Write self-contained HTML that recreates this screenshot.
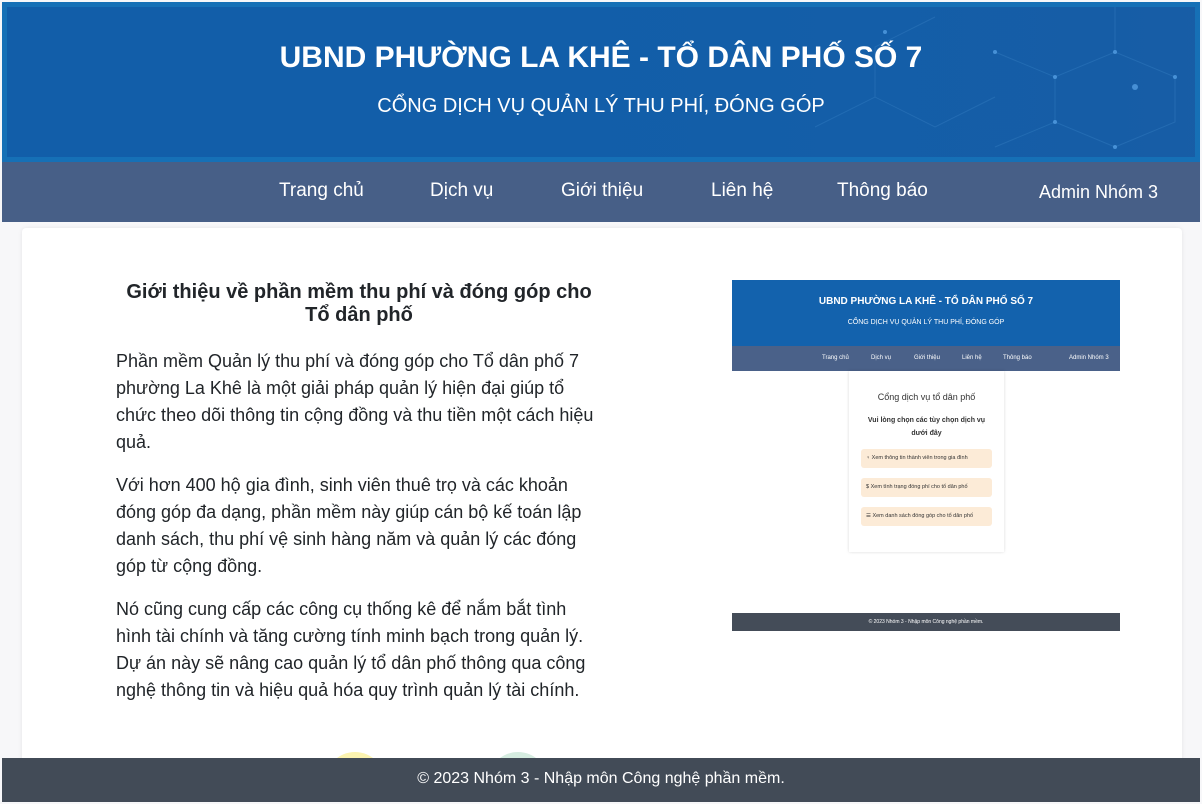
<!DOCTYPE html>
<html><head><meta charset="utf-8"><style>
*{margin:0;padding:0;box-sizing:border-box}
html,body{width:1202px;height:804px;overflow:hidden}
body{background:#f7f7f9;font-family:"Liberation Sans",sans-serif;position:relative}
.hdr{position:absolute;left:2px;top:2px;width:1198px;height:160px;background:#1670b6;padding:5px}
.hin{width:100%;height:100%;background:#125ea9;position:relative;overflow:hidden}
.hin h1{position:absolute;left:0;right:0;top:34px;text-align:center;color:#fff;font-size:30px;font-weight:bold}
.hin p{position:absolute;left:0;right:0;top:88px;text-align:center;color:#fff;font-size:20px}
.nav{position:absolute;left:2px;top:162px;width:1198px;height:60px;background:#475f87;color:#fff;font-size:19px}
.nav span{position:absolute;top:18px}
.card{position:absolute;left:22px;top:228px;width:1160px;height:540px;background:#fff;border-radius:4px;box-shadow:0 0 4px rgba(0,0,0,.08);overflow:hidden}
.txt{position:absolute;left:116px;top:281px;width:486px;color:#212529}
.txt h2{font-size:20px;font-weight:bold;text-align:center;line-height:23px;margin-bottom:21px}
.txt p{font-size:18px;line-height:27px;margin-bottom:16px}
.shot{position:absolute;left:732px;top:280px;width:388px;height:351px;background:#fff;font-family:"Liberation Sans",sans-serif}
.foot{position:absolute;left:2px;top:758px;width:1198px;height:44px;background:#424b57;color:#fff;font-size:16px;text-align:center;line-height:42px;z-index:5}
.ci{position:absolute;border-radius:50%}
</style></head><body>
<div class="hdr"><div class="hin">
<svg width="800" height="150" style="position:absolute;right:0;top:0" viewBox="0 0 800 150">
<defs><linearGradient id="g" x1="0" x2="1"><stop offset="0" stop-color="#125ea9" stop-opacity="0"/><stop offset="1" stop-color="#1b5ca3"/></linearGradient></defs>
<rect width="800" height="150" fill="url(#g)" opacity=".6"/>
<g stroke="#3d86c8" stroke-width="1" fill="none" opacity=".35">
<path d="M600 45L660 70L720 45L780 70M660 70L660 115L720 140M720 45L720 0M660 115L600 140M780 70L780 115L720 140"/>
<path d="M420 120L480 90L540 120L600 90M480 90L480 40L540 10"/>
</g>
<g fill="#5aa5ea" opacity=".7"><circle cx="660" cy="70" r="2"/><circle cx="720" cy="45" r="2"/><circle cx="780" cy="70" r="2"/><circle cx="740" cy="80" r="3"/><circle cx="660" cy="115" r="2"/><circle cx="720" cy="140" r="2"/><circle cx="490" cy="25" r="2"/><circle cx="600" cy="45" r="2"/></g>
</svg>
<h1>UBND PHƯỜNG LA KHÊ - TỔ DÂN PHỐ SỐ 7</h1>
<p>CỔNG DỊCH VỤ QUẢN LÝ THU PHÍ, ĐÓNG GÓP</p>
</div></div>
<div class="nav">
<span style="left:277px">Trang chủ</span><span style="left:428px">Dịch vụ</span><span style="left:559px">Giới thiệu</span><span style="left:709px">Liên hệ</span><span style="left:835px">Thông báo</span><span style="left:1037px;top:20px;font-size:18px">Admin Nhóm 3</span>
</div>
<div class="card">
<div class="ci" style="left:303px;top:524px;width:60px;height:60px;background:#fbf3b0"></div>
<div class="ci" style="left:466px;top:524px;width:60px;height:60px;background:#d5ece0"></div>
</div>
<div class="txt">
<h2>Giới thiệu về phần mềm thu phí và đóng góp cho Tổ dân phố</h2>
<p>Phần mềm Quản lý thu phí và đóng góp cho Tổ dân phố 7 phường La Khê là một giải pháp quản lý hiện đại giúp tổ chức theo dõi thông tin cộng đồng và thu tiền một cách hiệu quả.</p>
<p>Với hơn 400 hộ gia đình, sinh viên thuê trọ và các khoản đóng góp đa dạng, phần mềm này giúp cán bộ kế toán lập danh sách, thu phí vệ sinh hàng năm và quản lý các đóng góp từ cộng đồng.</p>
<p>Nó cũng cung cấp các công cụ thống kê để nắm bắt tình hình tài chính và tăng cường tính minh bạch trong quản lý. Dự án này sẽ nâng cao quản lý tổ dân phố thông qua công nghệ thông tin và hiệu quả hóa quy trình quản lý tài chính.</p>
</div>
<div class="shot">
<div style="position:absolute;left:0;top:0;width:388px;height:66px;background:#1362ad;color:#fff;text-align:center">
<div style="font-size:10px;font-weight:bold;margin-top:16px">UBND PHƯỜNG LA KHÊ - TỔ DÂN PHỐ SỐ 7</div>
<div style="font-size:7px;margin-top:12px">CỔNG DỊCH VỤ QUẢN LÝ THU PHÍ, ĐÓNG GÓP</div></div>
<div style="position:absolute;left:0;top:66px;width:388px;height:25px;background:#4a6189;color:#fff;font-size:6px">
<span style="position:absolute;left:90px;top:9px">Trang chủ</span><span style="position:absolute;left:139px;top:9px">Dịch vụ</span><span style="position:absolute;left:182px;top:9px">Giới thiệu</span><span style="position:absolute;left:230px;top:9px">Liên hệ</span><span style="position:absolute;left:271px;top:9px">Thông báo</span><span style="position:absolute;left:337px;top:9px">Admin Nhóm 3</span></div>
<div style="position:absolute;left:117px;top:91px;width:155px;height:181px;background:#fff;box-shadow:0 0 3px rgba(0,0,0,.15);text-align:center;color:#333">
<div style="font-size:9px;margin-top:21px">Cổng dịch vụ tổ dân phố</div>
<div style="font-size:7px;font-weight:bold;margin-top:12px;line-height:13px;padding:0 12px">Vui lòng chọn các tùy chọn dịch vụ dưới đây</div>
<div style="margin:9px 12px 0;height:19px;background:#fcebd7;border-radius:3px;font-size:5.5px;text-align:left;padding:6px 5px">♀ Xem thông tin thành viên trong gia đình</div>
<div style="margin:10px 12px 0;height:19px;background:#fcebd7;border-radius:3px;font-size:5.5px;text-align:left;padding:6px 5px">$ Xem tình trạng đóng phí cho tổ dân phố</div>
<div style="margin:10px 12px 0;height:19px;background:#fcebd7;border-radius:3px;font-size:5.5px;text-align:left;padding:6px 5px">☰ Xem danh sách đóng góp cho tổ dân phố</div>
</div>
<div style="position:absolute;left:0;top:333px;width:388px;height:18px;background:#444c58;color:#fff;font-size:5px;text-align:center;line-height:18px">© 2023 Nhóm 3 - Nhập môn Công nghệ phần mềm.</div>
</div>
<div class="foot">© 2023 Nhóm 3 - Nhập môn Công nghệ phần mềm.</div>
</body></html>
